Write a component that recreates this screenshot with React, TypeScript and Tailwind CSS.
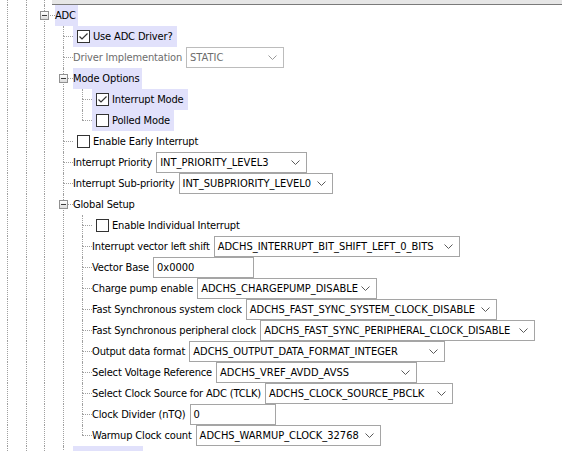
import React from "react";

type Kind = "group" | "check" | "combo" | "input" | "blank";

interface Row {
  label: string;
  kind: Kind;
  depth: number;
  last?: boolean;
  hl?: boolean;
  checked?: boolean;
  value?: string;
  box?: string;
  disabled?: boolean;
}

const rows: Row[] = [
  { label: "ADC", kind: "group", depth: 2, hl: true },
  { label: "Use ADC Driver?", kind: "check", depth: 3, hl: true, checked: true },
  { label: "Driver Implementation", kind: "combo", depth: 3, value: "STATIC", box: "w-[98px]", disabled: true },
  { label: "Mode Options", kind: "group", depth: 3, hl: true },
  { label: "Interrupt Mode", kind: "check", depth: 4, hl: true, checked: true },
  { label: "Polled Mode", kind: "check", depth: 4, hl: true, last: true },
  { label: "Enable Early Interrupt", kind: "check", depth: 3 },
  { label: "Interrupt Priority", kind: "combo", depth: 3, value: "INT_PRIORITY_LEVEL3", box: "w-[151px]" },
  { label: "Interrupt Sub-priority", kind: "combo", depth: 3, value: "INT_SUBPRIORITY_LEVEL0", box: "w-[154px]" },
  { label: "Global Setup", kind: "group", depth: 3 },
  { label: "Enable Individual Interrupt", kind: "check", depth: 4 },
  { label: "Interrupt vector left shift", kind: "combo", depth: 4, value: "ADCHS_INTERRUPT_BIT_SHIFT_LEFT_0_BITS", box: "w-[246px]" },
  { label: "Vector Base", kind: "input", depth: 4, value: "0x0000", box: "w-[101px]" },
  { label: "Charge pump enable", kind: "combo", depth: 4, value: "ADCHS_CHARGEPUMP_DISABLE", box: "w-[180px]" },
  { label: "Fast Synchronous system clock", kind: "combo", depth: 4, value: "ADCHS_FAST_SYNC_SYSTEM_CLOCK_DISABLE", box: "w-[251px]" },
  { label: "Fast Synchronous peripheral clock", kind: "combo", depth: 4, value: "ADCHS_FAST_SYNC_PERIPHERAL_CLOCK_DISABLE", box: "w-[275px]" },
  { label: "Output data format", kind: "combo", depth: 4, value: "ADCHS_OUTPUT_DATA_FORMAT_INTEGER", box: "w-[256px]" },
  { label: "Select Voltage Reference", kind: "combo", depth: 4, value: "ADCHS_VREF_AVDD_AVSS", box: "w-[201px]" },
  { label: "Select Clock Source for ADC (TCLK)", kind: "combo", depth: 4, value: "ADCHS_CLOCK_SOURCE_PBCLK", box: "w-[188px]" },
  { label: "Clock Divider (nTQ)", kind: "input", depth: 4, value: "0", box: "w-[86px]" },
  { label: "Warmup Clock count", kind: "combo", depth: 4, value: "ADCHS_WARMUP_CLOCK_32768", box: "w-[185px]", last: true },
  // next node below the fold: only the top of its selection shows
  { label: "", kind: "blank", depth: 3, hl: true },
];

// widths between tree guide lines at x = 7, 26, 44, 63, 82
const guideWidths = ["w-[19px]", "w-[18px]", "w-[19px]", "w-[19px]"];

function Guides({ depth }: { depth: number }) {
  return (
    <>
      <div className="w-[7px] shrink-0" />
      {guideWidths.slice(0, depth).map((w, i) => (
        <div key={i} className={`${w} h-full shrink-0 border-l border-dotted border-[#a0a0a0]`} />
      ))}
    </>
  );
}

function Expander() {
  return (
    <div className="absolute left-[-4px] top-[6px] flex h-[9px] w-[9px] items-center justify-center border border-[#919191] bg-gradient-to-b from-white to-[#dcdcdc]">
      <div className="h-px w-[5px] bg-[#3c3c3c]" />
    </div>
  );
}

function Connector({ depth, last, group }: { depth: number; last?: boolean; group: boolean }) {
  return (
    <div className={`relative flex h-full shrink-0 flex-col ${depth === 2 ? "w-[11px]" : "w-[10px]"}`}>
      <div className="h-[10px] border-l border-dotted border-[#a0a0a0]" />
      <div className={`flex-1 border-t border-dotted border-[#a0a0a0] ${last ? "" : "border-l"}`} />
      {group && <Expander />}
    </div>
  );
}

function CheckBox({ checked }: { checked?: boolean }) {
  return (
    <div className="flex h-[13px] w-[13px] shrink-0 items-center justify-center border border-[#333333] bg-white">
      {checked && (
        <svg width="11" height="11" viewBox="0 0 11 11">
          <polyline points="1.5,5.5 4,8 9.5,2.5" fill="none" stroke="#333333" strokeWidth="1.2" />
        </svg>
      )}
    </div>
  );
}

function Chevron({ disabled }: { disabled?: boolean }) {
  return (
    <svg width="9" height="5" viewBox="0 0 9 5" className="shrink-0">
      <polyline points="0.5,0.5 4.5,4.5 8.5,0.5" fill="none" stroke={disabled ? "#9a9a9a" : "#5a5a5a"} strokeWidth="1" />
    </svg>
  );
}

function Content({ row }: { row: Row }) {
  const hl = row.hl ? "bg-[#e1e1fb]" : "";
  if (row.kind === "blank") {
    return <div className={`h-full w-[70px] ${hl}`} />;
  }
  if (row.kind === "group") {
    return <div className={`flex h-full items-center pr-[2px] tracking-[-0.15px] ${hl}`}>{row.label}</div>;
  }
  if (row.kind === "check") {
    return (
      <div className={`flex h-full items-center gap-[3px] pl-[4px] pr-[4px] ${hl}`}>
        <CheckBox checked={row.checked} />
        <span className="tracking-[-0.15px]">{row.label}</span>
      </div>
    );
  }
  return (
    <div className="flex h-full items-center">
      <span className={`tracking-[-0.15px] ${row.disabled ? "text-[#6d6d6d]" : ""}`}>{row.label}</span>
      <div
        className={`ml-[4px] flex h-[21px] shrink-0 items-center border bg-white pl-[3px] pr-[6px] ${row.box} ${
          row.disabled ? "border-[#bcbcbc] text-[#6d6d6d]" : "border-[#a5a5a5]"
        }`}
      >
        <span className="flex-1">{row.value}</span>
        {row.kind === "combo" && <Chevron disabled={row.disabled} />}
      </div>
    </div>
  );
}

export default function App() {
  return (
    <div className="h-[451px] w-[562px] overflow-hidden bg-white font-['DejaVu_Sans_Condensed','DejaVu_Sans',sans-serif] text-[11px] leading-[14px] text-black">
      <div className="flex h-[5px]">
        <Guides depth={2} />
        <div className="h-full w-[8px] shrink-0 border-l border-dotted border-[#a0a0a0]" />
        <div className="flex-1 border-b border-[#7a7a7a] bg-[#e6e6e6]" />
      </div>
      {rows.map((row, i) => (
        <div key={i} className="flex h-[21px] items-stretch whitespace-nowrap">
          <Guides depth={row.depth} />
          <Connector depth={row.depth} last={row.last} group={row.kind === "group"} />
          <Content row={row} />
        </div>
      ))}
    </div>
  );
}
